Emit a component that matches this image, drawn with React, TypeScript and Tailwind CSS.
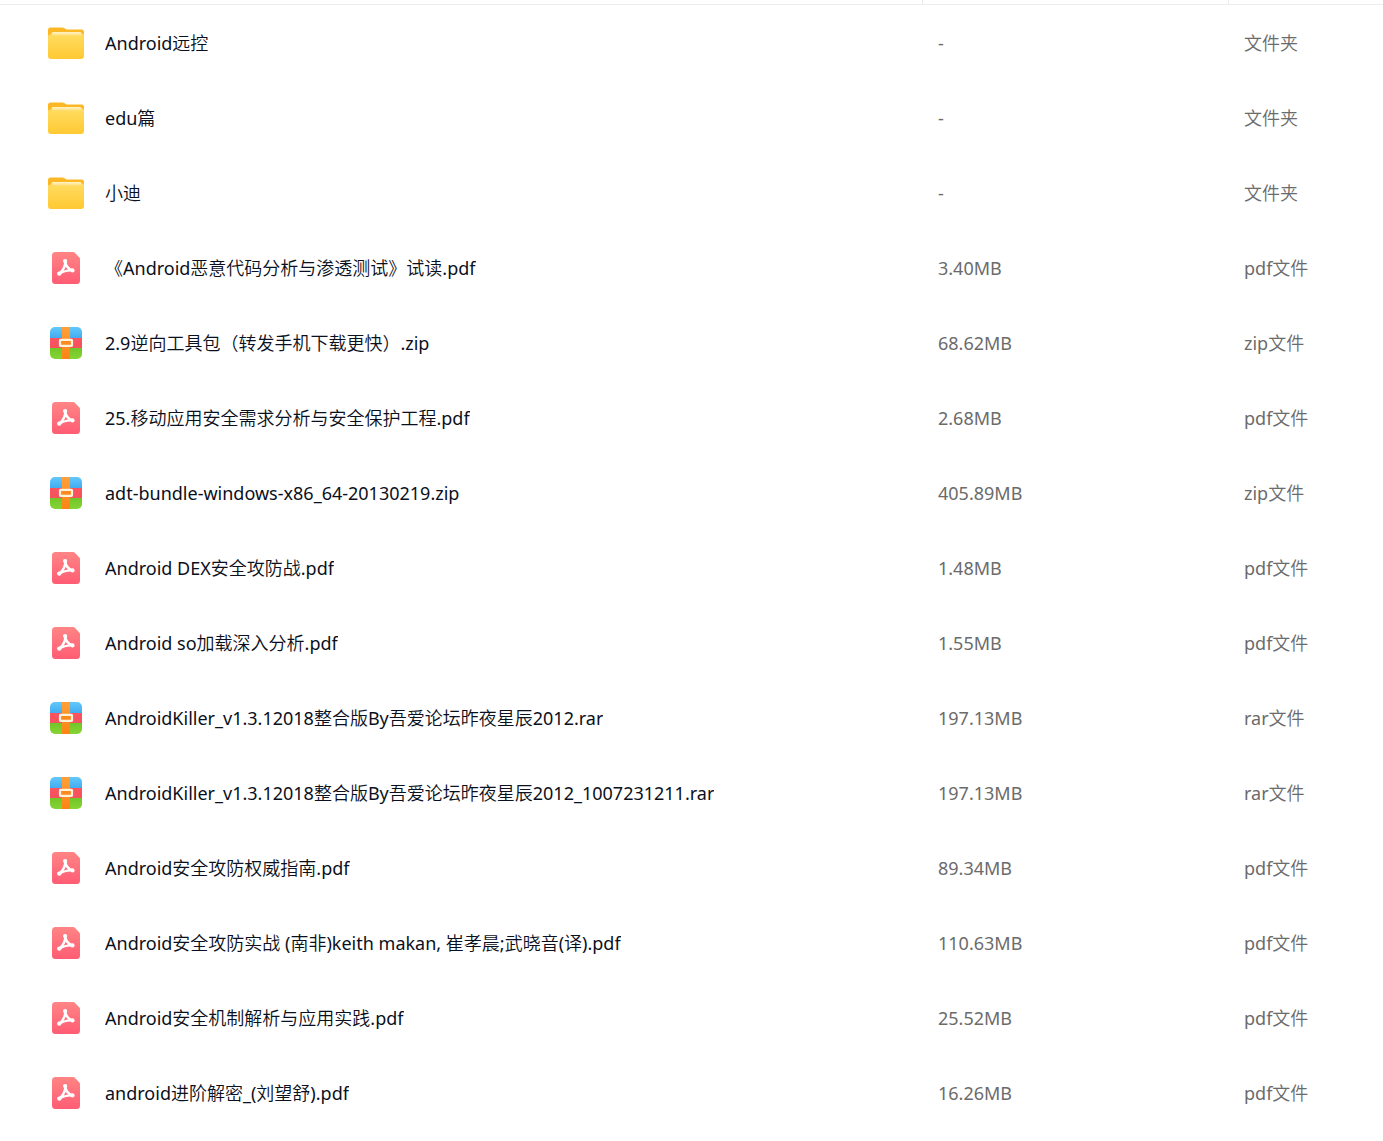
type FileKind = "folder" | "pdf" | "archive";

interface FileItem {
  name: string;
  size: string;
  type: string;
  kind: FileKind;
}

const FILES: FileItem[] = [
  { name: "Android远控", size: "-", type: "文件夹", kind: "folder" },
  { name: "edu篇", size: "-", type: "文件夹", kind: "folder" },
  { name: "小迪", size: "-", type: "文件夹", kind: "folder" },
  { name: "《Android恶意代码分析与渗透测试》试读.pdf", size: "3.40MB", type: "pdf文件", kind: "pdf" },
  { name: "2.9逆向工具包（转发手机下载更快）.zip", size: "68.62MB", type: "zip文件", kind: "archive" },
  { name: "25.移动应用安全需求分析与安全保护工程.pdf", size: "2.68MB", type: "pdf文件", kind: "pdf" },
  { name: "adt-bundle-windows-x86_64-20130219.zip", size: "405.89MB", type: "zip文件", kind: "archive" },
  { name: "Android DEX安全攻防战.pdf", size: "1.48MB", type: "pdf文件", kind: "pdf" },
  { name: "Android so加载深入分析.pdf", size: "1.55MB", type: "pdf文件", kind: "pdf" },
  { name: "AndroidKiller_v1.3.12018整合版By吾爱论坛昨夜星辰2012.rar", size: "197.13MB", type: "rar文件", kind: "archive" },
  { name: "AndroidKiller_v1.3.12018整合版By吾爱论坛昨夜星辰2012_1007231211.rar", size: "197.13MB", type: "rar文件", kind: "archive" },
  { name: "Android安全攻防权威指南.pdf", size: "89.34MB", type: "pdf文件", kind: "pdf" },
  { name: "Android安全攻防实战 (南非)keith makan, 崔孝晨;武晓音(译).pdf", size: "110.63MB", type: "pdf文件", kind: "pdf" },
  { name: "Android安全机制解析与应用实践.pdf", size: "25.52MB", type: "pdf文件", kind: "pdf" },
  { name: "android进阶解密_(刘望舒).pdf", size: "16.26MB", type: "pdf文件", kind: "pdf" },
];

function FolderIcon() {
  return (
    <svg viewBox="0 0 36 36" className="size-9 shrink-0" aria-hidden="true">
      <defs>
        <linearGradient id="folder-front" x1="0" y1="0" x2="0" y2="1">
          <stop offset="0" stopColor="#ffdc61" />
          <stop offset="1" stopColor="#ffc933" />
        </linearGradient>
        <linearGradient id="folder-paper" x1="0" y1="0" x2="0" y2="1">
          <stop offset="0" stopColor="#fff3c8" />
          <stop offset="1" stopColor="#ffe07a" />
        </linearGradient>
      </defs>
      <path d="M0 5a2.600 2.600 0 0 1 2.600-2.600h11.600a4 4 0 0 1 2.400.8l1.900 1.400h14.900A2.600 2.600 0 0 1 36 7.200V20H0z" fill="#fbb724" />
      <path d="M0 11.500Q0 9.500 2 9.500h12c2 0 2.300-1 4-1h16a2 2 0 0 1 2 2V31a3 3 0 0 1-3 3H3a3 3 0 0 1-3-3z" fill="url(#folder-front)" />
      <rect x="3.500" y="7" width="30" height="3.500" rx="1.500" fill="url(#folder-paper)" />
    </svg>
  );
}

function PdfIcon() {
  return (
    <svg viewBox="0 0 36 36" className="size-9 shrink-0" aria-hidden="true">
      <defs>
        <linearGradient id="pdf-sheet" x1="0" y1="0" x2="0" y2="1">
          <stop offset="0" stopColor="#ff8585" />
          <stop offset="1" stopColor="#ff5c73" />
        </linearGradient>
      </defs>
      <path d="M4 5.500A3.500 3.500 0 0 1 7.500 2h17.700a2 2 0 0 1 1.400.6l4.800 4.800a2 2 0 0 1 .6 1.400v21.700a3.500 3.500 0 0 1-3.500 3.500h-21A3.500 3.500 0 0 1 4 30.500z" fill="url(#pdf-sheet)" />
      <path
        d="M17.100 11c.6 4.500 3 8 7.400 9.300M17.300 11c.3 5-2.300 9.500-6 12.700M11.300 23.700c3.700-2.400 8.400-3.600 13.200-3.300"
        fill="none"
        stroke="#fff"
        strokeWidth="2.400"
        strokeLinecap="round"
      />
      <g fill="#fff">
        <circle cx="17.100" cy="11" r="2.100" />
        <circle cx="11.300" cy="23.600" r="2.200" />
        <circle cx="24.500" cy="20.400" r="2.100" />
      </g>
    </svg>
  );
}

function ArchiveIcon() {
  return (
    <svg viewBox="0 0 36 36" className="size-9 shrink-0" aria-hidden="true">
      <defs>
        <clipPath id="archive-shape">
          <rect x="2" y="2" width="32" height="32" rx="5" />
        </clipPath>
        <linearGradient id="archive-blue" x1="0" y1="0" x2="0" y2="1">
          <stop offset="0" stopColor="#62c8fb" />
          <stop offset="1" stopColor="#43acf0" />
        </linearGradient>
        <linearGradient id="archive-red" x1="0" y1="0" x2="0" y2="1">
          <stop offset="0" stopColor="#fa5460" />
          <stop offset="1" stopColor="#f4525c" />
        </linearGradient>
        <linearGradient id="archive-green" x1="0" y1="0" x2="0" y2="1">
          <stop offset="0" stopColor="#72c527" />
          <stop offset="1" stopColor="#86d436" />
        </linearGradient>
        <linearGradient id="archive-strap" x1="0" y1="0" x2="0" y2="1">
          <stop offset="0" stopColor="#ff9f38" />
          <stop offset="1" stopColor="#fb8414" />
        </linearGradient>
      </defs>
      <g clipPath="url(#archive-shape)">
        <rect x="2" y="2" width="32" height="11" fill="url(#archive-blue)" />
        <rect x="2" y="13" width="32" height="10" fill="url(#archive-red)" />
        <rect x="2" y="23" width="32" height="11" fill="url(#archive-green)" />
        <rect x="14" y="2" width="8" height="32" fill="url(#archive-strap)" />
      </g>
      <rect x="12" y="14.800" width="12" height="6" rx="0.500" fill="#fb8b20" stroke="#fff3dc" strokeWidth="2.200" />
    </svg>
  );
}

const ICONS = {
  folder: FolderIcon,
  pdf: PdfIcon,
  archive: ArchiveIcon,
};

function FileRow({ file }: { file: FileItem }) {
  const Icon = ICONS[file.kind];

  return (
    <tr className="h-[75px]">
      <td className="p-0 pl-12">
        <div className="flex items-center gap-[21px]">
          <Icon />
          <a href="#" className="truncate text-[#0b1020]">
            {file.name}
          </a>
        </div>
      </td>
      <td className="p-0 pl-4">{file.size}</td>
      <td className="p-0 pl-4">{file.type}</td>
    </tr>
  );
}

export default function App() {
  return (
    <main className="min-h-screen bg-white font-['Noto_Sans','Noto_Sans_CJK_SC_DemiLight','Noto_Sans_CJK_SC',sans-serif] text-[18px] leading-6 text-[#6b6b6b]">
      <table className="w-full table-fixed border-collapse">
        <colgroup>
          <col />
          <col className="w-[306px]" />
          <col className="w-[155px]" />
        </colgroup>
        {/* bottom edge of the column header */}
        <thead>
          <tr>
            <td className="p-0">
              <div className="h-[5px] border-b border-[#ededed]" />
            </td>
            <td className="p-0">
              <div className="h-[5px] border-b border-l border-[#ededed]" />
            </td>
            <td className="p-0">
              <div className="h-[5px] border-b border-l border-[#ededed]" />
            </td>
          </tr>
        </thead>
        <tbody>
          {FILES.map((file) => (
            <FileRow key={file.name} file={file} />
          ))}
        </tbody>
      </table>
    </main>
  );
}
